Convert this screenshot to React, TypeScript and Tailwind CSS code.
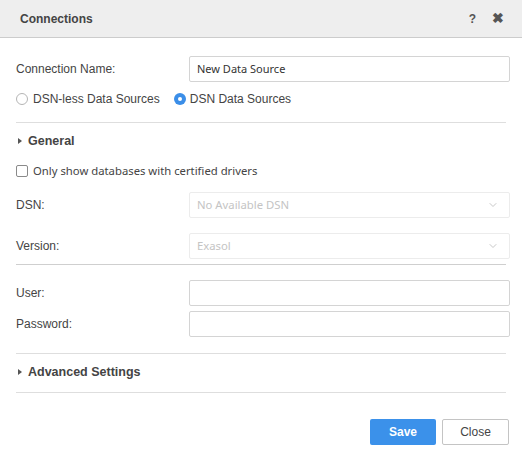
import { FiChevronDown } from 'react-icons/fi'

const Divider = ({ dark }: { dark?: boolean }) => (
  <div className={`h-px mx-4 ${dark ? 'bg-[#cfcfcf]' : 'bg-[#dedede]'}`} />
)

const Section = ({ title }: { title: string }) => (
  <div className="flex items-center gap-[6px] pl-[18px] text-[12.5px] font-bold text-[#444]">
    <svg width="4" height="6" viewBox="0 0 4 6"><path d="M0 0 L4 3 L0 6 Z" fill="#555" /></svg>
    <span>{title}</span>
  </div>
)

const Field = ({ label, children, className = '' }: { label: string; children: React.ReactNode; className?: string }) => (
  <div className={`flex items-center pl-4 pr-3 ${className}`}>
    <div className="w-[173px] text-[12px] text-[#444]">{label}</div>
    {children}
  </div>
)

const Input = ({ value }: { value?: string }) => (
  <div className="flex-1 h-[26px] border border-[#d4d4d4] rounded-[2px] bg-white flex items-center px-[7px] text-[11px] text-[#333] font-['Noto_Sans',sans-serif]">
    {value}
  </div>
)

const Select = ({ value }: { value: string }) => (
  <div className="flex-1 h-[26px] border border-[#ececec] rounded-[2px] bg-white flex items-center justify-between pl-[7px] pr-[10px] text-[11.3px] text-[#c4c4c4] font-['Noto_Sans',sans-serif]">
    <span>{value}</span>
    <FiChevronDown size={12} className="text-[#c8c8c8]" />
  </div>
)

export default function App() {
  return (
    <div className="w-[522px] h-[457px] bg-white font-['Liberation_Sans',Arial,sans-serif] flex flex-col">
      <div className="h-[38px] bg-[#eeeeee] border-b border-[#cccccc] flex items-center justify-between pl-5 pr-[18px] shrink-0">
        <span className="text-[12px] font-bold text-[#444]">Connections</span>
        <div className="flex items-center gap-[16px] text-[12px] font-bold text-[#555]">
          <span>?</span>
          <span className="text-[14px]">✖</span>
        </div>
      </div>

      <Field label="Connection Name:" className="mt-[18px]">
        <Input value="New Data Source" />
      </Field>

      <div className="flex items-center pl-4 mt-[5px] h-[24px] text-[12px] text-[#444]">
        <span className="w-[12px] h-[12px] rounded-full border border-[#b5b5b5] bg-white" />
        <span className="ml-[5px]">DSN-less Data Sources</span>
        <span className="ml-[14px] w-[12px] h-[12px] rounded-full bg-[#3b8ee8] flex items-center justify-center">
          <span className="w-[4px] h-[4px] rounded-full bg-white" />
        </span>
        <span className="ml-[4px]">DSN Data Sources</span>
      </div>

      <div className="mt-[11px]"><Divider /></div>

      <div className="mt-[11px] h-[14px] flex items-center"><Section title="General" /></div>

      <div className="mt-[16px] flex items-center pl-4 h-[14px] text-[11.3px] text-[#444] font-['Noto_Sans',sans-serif]">
        <span className="w-[12px] h-[12px] rounded-[2px] border border-[#8a8a8a] bg-white" />
        <span className="ml-[5px]">Only show databases with certified drivers</span>
      </div>

      <Field label="DSN:" className="mt-[14px]">
        <Select value="No Available DSN" />
      </Field>
      <Field label="Version:" className="mt-[15px]">
        <Select value="Exasol" />
      </Field>

      <div className="mt-[5px]"><Divider dark /></div>

      <Field label="User:" className="mt-[15px]">
        <Input />
      </Field>
      <Field label="Password:" className="mt-[5px]">
        <Input />
      </Field>

      <div className="mt-[16px]"><Divider /></div>
      <div className="mt-[11px] h-[14px] flex items-center"><Section title="Advanced Settings" /></div>
      <div className="mt-[13px]"><Divider /></div>

      <div className="mt-[26px] flex justify-end gap-[6px] pr-[13px]">
        <button className="w-[66px] h-[26px] rounded-[2px] bg-[#3b91ea] text-white text-[12px] font-bold">Save</button>
        <button className="w-[67px] h-[26px] rounded-[2px] border border-[#c4c4c4] bg-white text-[#444] text-[12px]">Close</button>
      </div>
    </div>
  )
}
